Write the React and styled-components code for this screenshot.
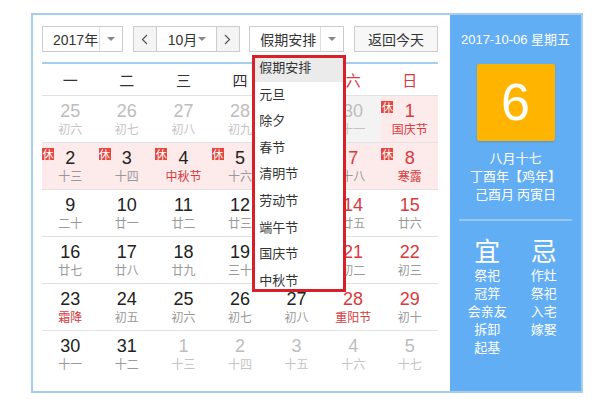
import React from 'react'
import styled, { createGlobalStyle } from 'styled-components'

const weekdays = ['一', '二', '三', '四', '五', '六', '日']

// o: other month, w: weekend (red number), h: festival (red lunar), rest: 休, work: 班
const rows = [
  [
    { d: 25, l: '初六', o: 1 }, { d: 26, l: '初七', o: 1 }, { d: 27, l: '初八', o: 1 },
    { d: 28, l: '初九', o: 1 }, { d: 29, l: '初十', o: 1 }, { d: 30, l: '十一', o: 1, work: 1 },
    { d: 1, l: '国庆节', w: 1, h: 1, rest: 1 },
  ],
  [
    { d: 2, l: '十三', rest: 1 }, { d: 3, l: '十四', rest: 1 }, { d: 4, l: '中秋节', h: 1, rest: 1 },
    { d: 5, l: '十六', rest: 1 }, { d: 6, l: '十七', rest: 1 }, { d: 7, l: '十八', w: 1, rest: 1 },
    { d: 8, l: '寒露', w: 1, h: 1, rest: 1 },
  ],
  [
    { d: 9, l: '二十' }, { d: 10, l: '廿一' }, { d: 11, l: '廿二' }, { d: 12, l: '廿三' },
    { d: 13, l: '廿四' }, { d: 14, l: '廿五', w: 1 }, { d: 15, l: '廿六', w: 1 },
  ],
  [
    { d: 16, l: '廿七' }, { d: 17, l: '廿八' }, { d: 18, l: '廿九' }, { d: 19, l: '三十' },
    { d: 20, l: '九月' }, { d: 21, l: '初二', w: 1 }, { d: 22, l: '初三', w: 1 },
  ],
  [
    { d: 23, l: '霜降', h: 1 }, { d: 24, l: '初五' }, { d: 25, l: '初六' }, { d: 26, l: '初七' },
    { d: 27, l: '初八' }, { d: 28, l: '重阳节', w: 1, h: 1 }, { d: 29, l: '初十', w: 1 },
  ],
  [
    { d: 30, l: '十一' }, { d: 31, l: '十二' }, { d: 1, l: '十三', o: 1 }, { d: 2, l: '十四', o: 1 },
    { d: 3, l: '十五', o: 1 }, { d: 4, l: '十六', o: 1 }, { d: 5, l: '十七', o: 1 },
  ],
]

const holidays = ['假期安排', '元旦', '除夕', '春节', '清明节', '劳动节', '端午节', '国庆节', '中秋节']
const yi = ['祭祀', '冠笄', '会亲友', '拆卸', '起基']
const ji = ['作灶', '祭祀', '入宅', '嫁娶']

function Chevron({ dir }) {
  return (
    <svg width="7" height="11" viewBox="0 0 7 11">
      <path
        d={dir === 'left' ? 'M6 1 L1.5 5.5 L6 10' : 'M1 1 L5.5 5.5 L1 10'}
        fill="none"
        stroke="#555"
        strokeWidth="1.2"
      />
    </svg>
  )
}

function App() {
  return (
    <>
      <GlobalStyle />
      <Wrap>
        <Main>
          <Toolbar>
            <Select $w={81}>
              <SelectText>2017年</SelectText>
              <SelectArrow />
            </Select>
            <MonthGroup>
              <NavBtn><Chevron dir="left" /></NavBtn>
              <MonthField>
                <span>10月</span>
                <Caret />
              </MonthField>
              <NavBtn $right><Chevron dir="right" /></NavBtn>
            </MonthGroup>
            <Select $w={95}>
              <SelectText>假期安排</SelectText>
              <SelectArrow />
              <Dropdown>
                <DropList>
                  {holidays.map((h, i) => (
                    <DropItem key={h} $active={i === 0}>{h}</DropItem>
                  ))}
                </DropList>
              </Dropdown>
            </Select>
            <TodayBtn>返回今天</TodayBtn>
          </Toolbar>

          <WeekHead>
            {weekdays.map((w, i) => (
              <WeekDay key={w} $red={i > 4}>{w}</WeekDay>
            ))}
          </WeekHead>

          {rows.map((row, r) => (
            <Row key={r} $last={r === rows.length - 1}>
              {row.map((c, i) => (
                <Cell key={i} $rest={c.rest} $work={c.work}>
                  {c.rest && <Badge>休</Badge>}
                  <DayNum $other={c.o} $red={c.w && !c.o}>{c.d}</DayNum>
                  <Lunar $other={c.o} $red={c.h}>{c.l}</Lunar>
                </Cell>
              ))}
            </Row>
          ))}
        </Main>

        <Side>
          <DateLine>2017-10-06 星期五</DateLine>
          <DayBox>6</DayBox>
          <LunarInfo>
            <div>八月十七</div>
            <div>丁酉年【鸡年】</div>
            <div>己酉月 丙寅日</div>
          </LunarInfo>
          <Divider />
          <YiJi>
            <YiJiCol>
              <Big>宜</Big>
              {yi.map(t => <Small key={t}>{t}</Small>)}
            </YiJiCol>
            <YiJiCol>
              <Big>忌</Big>
              {ji.map(t => <Small key={t}>{t}</Small>)}
            </YiJiCol>
          </YiJi>
        </Side>
      </Wrap>
    </>
  )
}

export default App

const GlobalStyle = createGlobalStyle`
  body {
    margin: 0;
    background: #fff;
    font-family: "Liberation Sans", "Noto Sans CJK SC", sans-serif;
  }
`

const Wrap = styled.div`
  margin: 13px 0 0 31px;
  width: 552px;
  height: 380px;
  box-sizing: border-box;
  border: 2px solid #a6cdee;
  display: flex;
  background: #fff;
`

const Main = styled.div`
  flex: 1;
  padding: 11px 12px 0 9px;
  position: relative;
`

const Toolbar = styled.div`
  display: flex;
  justify-content: space-between;
  height: 26px;
  font-size: 14px;
  color: #333;
`

const Select = styled.div`
  position: relative;
  width: ${p => p.$w}px;
  box-sizing: border-box;
  border: 1px solid #ccc;
  display: flex;
  align-items: center;
  background: #fff;
`

const SelectText = styled.div`
  flex: 1;
  padding-left: 10px;
  white-space: nowrap;
`

const Caret = styled.span`
  width: 0;
  height: 0;
  border-left: 4px solid transparent;
  border-right: 4px solid transparent;
  border-top: 4px solid #888;
`

const SelectArrow = styled.div`
  width: 22px;
  height: 100%;
  border-left: 1px solid #ddd;
  display: flex;
  align-items: center;
  justify-content: center;
  &::after {
    content: '';
    border-left: 4px solid transparent;
    border-right: 4px solid transparent;
    border-top: 4px solid #888;
  }
`

const MonthGroup = styled.div`
  width: 107px;
  box-sizing: border-box;
  border: 1px solid #ccc;
  display: flex;
`

const NavBtn = styled.div`
  width: 22px;
  background: #f4f4f4;
  display: flex;
  align-items: center;
  justify-content: center;
  border-right: ${p => (p.$right ? 'none' : '1px solid #ccc')};
  border-left: ${p => (p.$right ? '1px solid #ccc' : 'none')};
`

const MonthField = styled.div`
  flex: 1;
  display: flex;
  align-items: center;
  padding: 0 10px 0 11px;
  justify-content: space-between;
`

const TodayBtn = styled.div`
  width: 84px;
  box-sizing: border-box;
  border: 1px solid #ccc;
  background: #f7f7f7;
  display: flex;
  align-items: center;
  justify-content: center;
`

const Dropdown = styled.div`
  position: absolute;
  left: 2px;
  top: 28px;
  width: 94px;
  height: 237px;
  box-sizing: border-box;
  border: 3px solid #d91f27;
  background: #fff;
  overflow: hidden;
  z-index: 5;
`

const DropList = styled.div`
  margin-top: -3px;
`

const DropItem = styled.div`
  height: 26.6px;
  line-height: 26.6px;
  padding-left: 4px;
  font-size: 13px;
  color: #333;
  background: ${p => (p.$active ? '#ebebeb' : '#fff')};
`

const WeekHead = styled.div`
  margin-top: 10px;
  border-top: 2px solid #a6cdee;
  border-bottom: 1px solid #e2e2e2;
  height: 34px;
  box-sizing: border-box;
  display: grid;
  grid-template-columns: repeat(7, 1fr);
  align-items: center;
  text-align: center;
  font-size: 15px;
`

const WeekDay = styled.div`
  font-family: "Noto Sans CJK SC", sans-serif;
  color: ${p => (p.$red ? '#d9393d' : '#333')};
`

const Row = styled.div`
  height: 47px;
  box-sizing: border-box;
  display: grid;
  grid-template-columns: repeat(7, 1fr);
  border-bottom: ${p => (p.$last ? 'none' : '1px solid #e2e2e2')};
`

const Cell = styled.div`
  position: relative;
  text-align: center;
  padding-top: 5px;
  background: ${p => (p.$rest ? '#fdebeb' : p.$work ? '#f3f3f3' : 'transparent')};
`

const Badge = styled.span`
  position: absolute;
  top: 5px;
  left: 0;
  width: 12px;
  height: 12px;
  background: #e4483f;
  color: #fff;
  font-size: 11px;
  line-height: 12px;
  text-align: center;
  font-family: "Noto Sans CJK SC", sans-serif;
`

const DayNum = styled.div`
  font-size: 18px;
  line-height: 20px;
  color: ${p => (p.$other ? '#bdbdbd' : p.$red ? '#d9393d' : '#222')};
`

const Lunar = styled.div`
  font-size: 12px;
  line-height: 16px;
  font-family: "Noto Sans CJK SC", sans-serif;
  color: ${p => (p.$red ? '#d9393d' : p.$other ? '#c4c4c4' : '#999')};
`

const Side = styled.div`
  width: 131px;
  background: #62aef5;
  color: #fff;
  display: flex;
  flex-direction: column;
  align-items: center;
  padding-top: 16px;
  font-size: 13px;
`

const DateLine = styled.div`
  line-height: 18px;
  white-space: nowrap;
`

const DayBox = styled.div`
  margin-top: 15px;
  width: 78px;
  height: 77px;
  background: #ffb500;
  border-radius: 2px;
  box-shadow: 0 1px 2px rgba(0, 0, 0, 0.15);
  font-size: 52px;
  line-height: 77px;
  text-align: center;
`

const LunarInfo = styled.div`
  margin-top: 8px;
  line-height: 18px;
  text-align: center;
  font-family: "Noto Sans CJK SC", sans-serif;
`

const Divider = styled.div`
  margin-top: 16px;
  width: 113px;
  height: 2px;
  background: #93c8f7;
`

const YiJi = styled.div`
  width: 113px;
  display: flex;
  margin-top: 14px;
`

const YiJiCol = styled.div`
  flex: 1;
  text-align: center;
  font-family: "Noto Sans CJK SC", sans-serif;
`

const Big = styled.div`
  font-size: 26px;
  line-height: 30px;
  margin-bottom: 1px;
`

const Small = styled.div`
  line-height: 18px;
  font-size: 13px;
`
